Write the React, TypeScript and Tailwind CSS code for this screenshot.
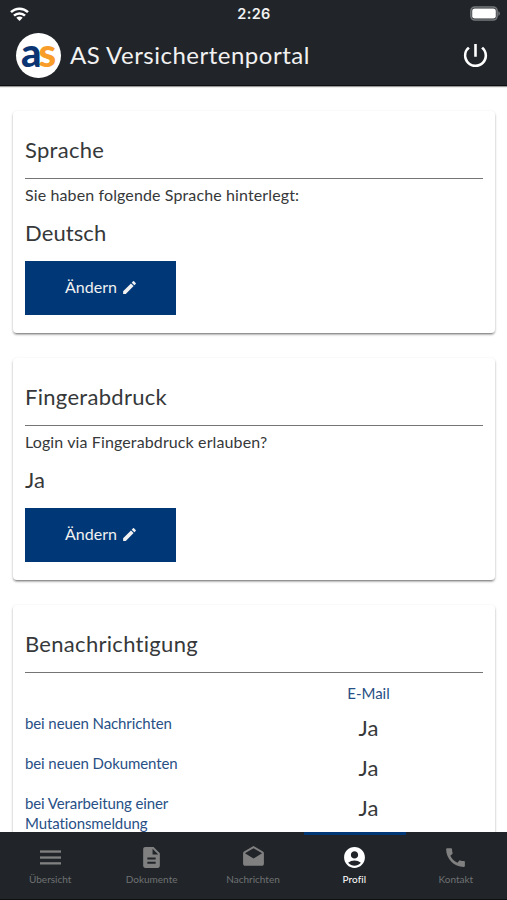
import type { ReactNode } from "react";
import clsx from "clsx";
import {
  MdAccountCircle,
  MdCall,
  MdDescription,
  MdDrafts,
  MdEdit,
  MdPowerSettingsNew,
} from "react-icons/md";

const MenuIcon = () => (
  <svg width="21" height="15" viewBox="0 0 21 15" fill="currentColor">
    <rect y="0.4" width="21" height="2.3" />
    <rect y="6.4" width="21" height="2.3" />
    <rect y="12.2" width="21" height="2.3" />
  </svg>
);

const tabs = [
  { label: "Übersicht", icon: <MenuIcon /> },
  { label: "Dokumente", icon: <MdDescription size={25} /> },
  { label: "Nachrichten", icon: <MdDrafts size={25} /> },
  { label: "Profil", icon: <MdAccountCircle size={25} />, active: true },
  { label: "Kontakt", icon: <MdCall size={25} /> },
];

const notifications = [
  "bei neuen Nachrichten",
  "bei neuen Dokumenten",
  "bei Verarbeitung einer Mutationsmeldung",
];

const StatusBar = () => (
  <div className="flex h-7 items-center justify-between pl-[10px] pr-[7px]">
    <svg width="19" height="15" viewBox="0 0 19 15" fill="none" stroke="white" strokeWidth="2.5">
      <path d="M1 5.2C5.8 .5 13.2 .5 18 5.2" />
      <path d="M4 8.6C7 5.7 12 5.7 15 8.6" />
      <path d="M9.5 14L6.3 10.8C8.1 9.2 10.9 9.2 12.7 10.8Z" fill="white" stroke="none" />
    </svg>
    <span className="ml-[9px] font-[Inter] text-[14.5px] font-semibold tracking-[0.4px] text-[#f1f1f1]">
      2:26
    </span>
    <svg width="30" height="15" viewBox="0 0 30 15" className="-mt-[2px]">
      <rect x="0.9" y="1" width="26.2" height="13" rx="4" fill="#212529" stroke="#77797c" strokeWidth="1.6" />
      <rect x="2.2" y="2.4" width="23.6" height="10.2" rx="2.4" fill="white" />
      <path d="M28.3 5.2C30.4 6 30.4 9 28.3 9.8Z" fill="#77797c" />
    </svg>
  </div>
);

const Header = () => (
  <header className="h-[86px] shrink-0 border-b border-[#0d0f11] bg-[#212529] text-white shadow-[0_1px_1px_rgba(0,0,0,0.4)]">
    <StatusBar />
    <div className="flex h-[55px] items-center pl-4 pr-4">
      <div className="flex size-[45px] items-center justify-center rounded-full bg-white pb-[7px] text-[40px] font-black leading-none">
        <span className="z-10 -mr-[3px] text-[#0a3472]">a</span>
        <span className="text-[#f89c2a]">s</span>
      </div>
      <h1 className="ml-[9px] flex-1 pb-px text-[24px] tracking-[0.5px] text-[#f1f1f1]">
        AS Versichertenportal
      </h1>
      <MdPowerSettingsNew size={31} />
    </div>
  </header>
);

const Card = ({ title, children }: { title: string; children: ReactNode }) => (
  <section
    className="min-h-[222px] shrink-0 rounded-[4px] bg-white px-3 pt-[18px]
    shadow-[0_3px_1px_-2px_rgba(0,0,0,0.2),0_2px_2px_0_rgba(0,0,0,0.22),0_1px_3px_0_rgba(0,0,0,0.16)]"
  >
    <h2 className="h-[50px] border-b border-[#757575] pt-[5px] text-[22px] leading-[32px] tracking-[0.3px]">
      {title}
    </h2>
    {children}
  </section>
);

const Setting = ({ question, value }: { question: string; value: string }) => (
  <>
    <p className="mt-[4px] text-[16px] leading-6 tracking-[0.12px]">{question}</p>
    <p className="mt-[10px] text-[22px] leading-8 tracking-[0.1px]">{value}</p>
    <button className="mt-[12px] flex h-[54px] w-[151px] items-center justify-center gap-1 bg-[#003777] pb-[2px] pl-[2px] text-[16px] text-[#f1f1f1]">
      Ändern <MdEdit size={17} />
    </button>
  </>
);

const TabBar = () => (
  <nav className="flex h-[68px] shrink-0 border-b border-[#0d0f11] bg-[#212529]">
    {tabs.map((tab) => (
      <div
        key={tab.label}
        className={clsx(
          "flex flex-1 flex-col items-center border-t-[3px] pr-px",
          tab.active ? "border-[#003777] text-white" : "border-[#212529] text-[#808080]"
        )}
      >
        <div className="mt-[8px] flex h-[29px] items-center">{tab.icon}</div>
        <span
          className={clsx(
            "text-[10px] leading-[14px]",
            tab.active ? "tracking-[0.1px]" : "text-[#6f7173]"
          )}
        >
          {tab.label}
        </span>
      </div>
    ))}
  </nav>
);

const App = () => {
  return (
    <div className="flex h-[900px] w-[507px] flex-col overflow-hidden bg-white font-[Lato,sans-serif] text-[#36383a]">
      <Header />
      <main className="flex min-h-0 flex-1 flex-col gap-[25px] overflow-hidden pl-[13px] pr-3 pt-[25px]">
        <Card title="Sprache">
          <Setting question="Sie haben folgende Sprache hinterlegt:" value="Deutsch" />
        </Card>
        <Card title="Fingerabdruck">
          <Setting question="Login via Fingerabdruck erlauben?" value="Ja" />
        </Card>
        <Card title="Benachrichtigung">
          <div className="pb-6 text-[15px] leading-5 text-[#285086]">
            <div className="grid h-10 grid-cols-2 pt-[10px]">
              <span className="col-start-2 text-center">E-Mail</span>
            </div>
            {notifications.map((label) => (
              <div key={label} className="grid min-h-10 grid-cols-2">
                <span className="w-[180px] tracking-[-0.1px]">{label}</span>
                <span className="text-center text-[22px] leading-[30px] text-[#36383a]">Ja</span>
              </div>
            ))}
          </div>
        </Card>
      </main>
      <TabBar />
    </div>
  );
};

export default App;
